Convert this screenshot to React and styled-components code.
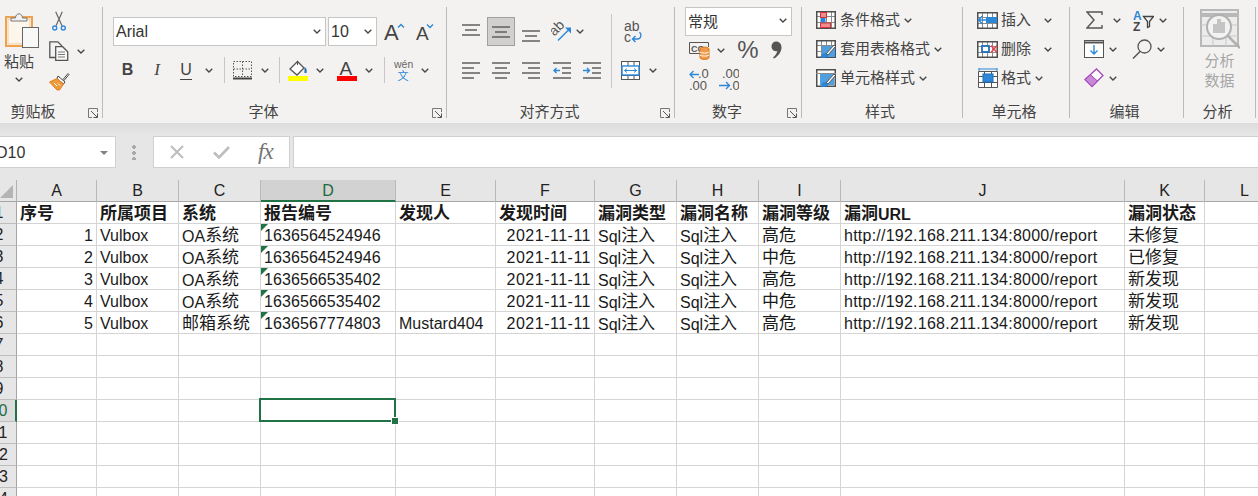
import React from 'react';
import styled, { createGlobalStyle } from 'styled-components';

const CJK = '"Noto Sans CJK SC", "Liberation Sans", sans-serif';
const LAT = '"Liberation Sans", "Noto Sans CJK SC", sans-serif';
const BLUE = '#2b88d8';

const Global = createGlobalStyle`
  html, body { margin: 0; padding: 0; width: 1258px; height: 496px; overflow: hidden; background: #fff; }
  * { box-sizing: border-box; }
`;

const Page = styled.div`
  width: 1258px; height: 496px; overflow: hidden; display: flex; flex-direction: column;
  font-family: ${LAT}; color: #333;
`;

/* ---------- ribbon ---------- */
const Ribbon = styled.div`
  height: 123px; flex: none; display: flex; align-items: flex-start; padding-top: 7px; background: #f3f2f1;
`;
const Group = styled.section`
  width: ${p => p.$w}px; height: 111px; flex: none; display: flex; flex-direction: column;
  border-right: 1px solid #bdbbb9;
`;
const Body = styled.div`
  height: 95px; flex: none; display: flex; flex-direction: ${p => p.$row ? 'row' : 'column'};
  padding-top: ${p => p.$top ?? 0}px; padding-left: ${p => p.$left ?? 0}px; gap: ${p => p.$gap ?? 0}px;
`;
const LabelRow = styled.div`
  height: 18px; display: grid; grid-template-columns: 1fr auto 1fr; align-items: center;
  font: 400 15px/18px ${CJK}; color: #444; padding-right: 4px;
`;
const LabelText = styled.span`grid-column: 2; margin-right: ${p => p.$pull ?? 0}px;`;
const LauncherSlot = styled.span`grid-column: 3; justify-self: end; display: flex; margin-top: 3px;`;
const Row = styled.div`
  display: flex; align-items: center; flex: none; height: ${p => p.$h}px;
  padding-left: ${p => p.$left ?? 0}px; margin-top: ${p => p.$mt ?? 0}px;
`;
const Tool = styled.span`
  display: flex; align-items: center; justify-content: center; flex: none;
  width: ${p => p.$w}px; height: ${p => p.$h ? p.$h + 'px' : 'auto'}; margin-left: ${p => p.$ml ?? 0}px;
  ${p => p.$active ? 'background: #d2d0ce; border: 1px solid #a19f9d;' : ''}
`;
const Divider = styled.span`
  width: 1px; height: 26px; flex: none; background: #c8c6c4; margin-left: ${p => p.$ml}px;
`;
const TallDivider = styled.span`
  width: 1px; height: 74px; flex: none; background: #c8c6c4; margin: 7px 0 0 ${p => p.$ml}px;
`;
const Select = styled.div`
  width: ${p => p.$w}px; height: 29px; flex: none; margin-left: ${p => p.$ml ?? 0}px;
  display: flex; align-items: center; justify-content: space-between;
  background: #fff; border: 1px solid #c8c6c4; padding: 0 4px ${p => p.$cjk ? 2 : 0}px 2px;
  font: 400 ${p => p.$fs ?? 16}px ${p => p.$cjk ? CJK : LAT}; color: #333;
`;
const ToolLabel = styled.span`
  font: 400 15px/20px ${CJK}; color: #444; margin-left: ${p => p.$ml ?? 0}px; white-space: nowrap;
  padding-bottom: 2px;
`;
const PasteCol = styled.div`
  width: 38px; display: flex; flex-direction: column; align-items: center; flex: none;
`;
const PasteIconSlot = styled.span`display: flex; margin: 5px 0 0 6px; height: 36px;`;
const PasteLabel = styled.span`font: 400 15px/20px ${CJK}; color: #444; margin-top: 3px;`;
const PasteChevron = styled.span`display: flex; margin-top: 6px;`;
const SmallCol = styled.div`
  display: flex; flex-direction: column; gap: 10px; margin-left: 11px; padding-top: 4px;
`;
const Column = styled.div`display: flex; flex-direction: column; flex: none; padding-top: ${p => p.$top ?? 0}px;`;
const Percent = styled.span`font: 400 24px/24px ${LAT}; color: #555;`;
const MutedText = styled.div`
  font: 400 15px/20px ${CJK}; color: #a6a6a6; text-align: center; margin-top: 1px;
`;
const AnalysisBody = styled(Body)`align-items: center; padding-left: 0;`;

/* ---------- formula bar ---------- */
const FormulaBar = styled.div`
  height: 57px; flex: none; display: flex; align-items: flex-start; padding-top: 13px;
  background: linear-gradient(#dcdcdc 0, #e6e6e6 11px);
`;
const NameBox = styled.div`
  width: 126px; height: 32px; margin-left: -10px; flex: none; display: flex; align-items: center;
  justify-content: space-between; background: #fff; border: 1px solid #d0d0d0; padding: 1px 7px 0 5px;
  font: 400 16px ${LAT}; color: #333;
`;
const NameArrow = styled.span`
  width: 0; height: 0; border-left: 4px solid transparent; border-right: 4px solid transparent;
  border-top: 4px solid #808080;
`;
const GripDots = styled.span`
  width: 4px; height: 16px; margin: 8px 0 0 16px; flex: none;
  background: radial-gradient(circle 2px, #a8a8a8 98%, transparent) 0 0 / 4px 6px repeat-y;
`;
const FxBox = styled.div`
  width: 137px; height: 32px; margin-left: 17px; flex: none; display: flex; align-items: center;
  background: #fff; border: 1px solid #d0d0d0;
`;
const FxGlyph = styled.span`
  font: italic 400 23px/28px "Liberation Serif", serif; color: #737373; margin-left: 28px; letter-spacing: -1px;
`;
const FormulaInput = styled.div`
  flex: 1; height: 32px; margin-left: 3px; background: #fff; border: 1px solid #d0d0d0; border-right: 0;
`;

/* ---------- sheet ---------- */
const Sheet = styled.div`
  display: grid; margin-left: -18px; width: 1302px; flex: none;
  grid-template-columns: 35px 80px 82px 82px 135px 100px 99px 82px 82px 82px 284px 80px 80px;
  grid-auto-rows: 22px; background: #fff;
`;
const Corner = styled.div`
  background: #e6e6e6; border-right: 1px solid #b1b1b1; border-bottom: 1px solid #a6a6a6;
  display: flex; align-items: flex-end; justify-content: flex-end; padding: 0 3px 3px 0;
`;
const CornerMark = styled.span`
  width: 0; height: 0; border-left: 13px solid transparent; border-bottom: 13px solid #b4b4b4;
`;
const ColHead = styled.div`
  background: ${p => p.$on ? '#d2d2d2' : '#e6e6e6'};
  border-right: 1px solid #b9b9b9;
  border-bottom: ${p => p.$on ? '2px solid #217346' : '1px solid #a6a6a6'};
  display: flex; align-items: center; justify-content: center; padding-top: 1px;
  font: 400 16px/20px ${LAT}; color: ${p => p.$on ? '#1e6b41' : '#222'};
`;
const RowHead = styled.div`
  background: ${p => p.$on ? '#dcdcdc' : '#e6e6e6'};
  border-right: ${p => p.$on ? '2px solid #217346' : '1px solid #a6a6a6'};
  border-bottom: 1px solid #bdbdbd;
  text-align: center; font: 400 16px/21px ${LAT}; color: ${p => p.$on ? '#1e6b41' : '#222'};
`;
const Cell = styled.div`
  position: relative; display: flex; align-items: center; overflow: hidden; white-space: nowrap;
  justify-content: ${p => p.$right ? 'flex-end' : 'flex-start'};
  padding: 1px 3px 0 3px; border-right: 1px solid #d4d4d4; border-bottom: 1px solid #d4d4d4;
  font: ${p => p.$head ? 700 : 400} 16px/21px ${LAT}; color: #1a1a1a;
  letter-spacing: ${p => p.$track ?? 0}px;
  ${p => p.$flag ? `&::before { content: ""; position: absolute; left: 0; top: 0; width: 0; height: 0;
    border-top: 7px solid #217346; border-right: 7px solid transparent; }` : ''}
`;
const SelectedCell = styled(Cell)`
  overflow: visible;
  &::after { content: ""; position: absolute; left: -2px; top: -2px; right: -1px; bottom: -1px;
    border: 2px solid #217346; }
  &::before { content: ""; position: absolute; right: -3px; bottom: -3px; width: 6px; height: 6px; z-index: 1;
    background: #217346; box-shadow: 0 0 0 1px #fff; clip-path: inset(-1px); }
`;
const CellText = styled.span`display: block;`;
const Han = styled.span`
  font-family: ${CJK}; font-size: 17px; line-height: 21px; vertical-align: 1px; letter-spacing: 0;
`;

/* ---------- icons ---------- */
const Svg = ({ w, h, children }) => (
  <svg width={w} height={h} viewBox={`0 0 ${w} ${h}`} fill="none" style={{ display: 'block', flex: 'none' }}>{children}</svg>
);
const Chevron = () => (
  <Svg w={8} h={5}><path d="M.7.7 4 4l3.3-3.3" stroke="#444" strokeWidth="1.3" /></Svg>
);
const Launcher = () => (
  <Svg w={10} h={10}>
    <path d="M9.5 4V.5H.5v9H4" stroke="#777" />
    <path d="M3 3l6 6M9.5 5.5v4h-4" stroke="#555" />
  </Svg>
);
const Paste = () => (
  <Svg w={34} h={36}>
    <rect x="1" y="5" width="26" height="29" fill="#fff" stroke="#eda252" strokeWidth="2" />
    <rect x="3" y="7" width="22" height="25" fill="#fdf6ec" stroke="#f6c994" />
    <path d="M6 9V6h4.500c0-5.500 7-5.500 7 0H22v3z" fill="#f3f2f1" stroke="#777" />
    <rect x="17.500" y="15.500" width="16" height="20" fill="#f8f8f8" stroke="#666" />
  </Svg>
);
const Scissors = () => (
  <Svg w={14} h={20}>
    <path d="M4 14.800 10.300.8M10 14.800 3.700.8" stroke="#666" strokeWidth="1.200" />
    <circle cx="2.700" cy="17" r="2" stroke={BLUE} strokeWidth="1.400" />
    <circle cx="11.300" cy="17" r="2" stroke={BLUE} strokeWidth="1.400" />
  </Svg>
);
const Copy = () => (
  <Svg w={20} h={20}>
    <path d="M6 16.500H.8V.8h8L13 5" stroke="#555" strokeWidth="1.300" />
    <path d="M6.700 5.700h7l5 5v8.700h-12z" fill="#f8f8f8" stroke="#555" strokeWidth="1.300" />
    <path d="M9 11h7M9 13.500h7M9 16h7" stroke="#777" />
  </Svg>
);
const Brush = () => (
  <Svg w={21} h={20}>
    <path d="M14 8.500 19 2.500l1 1-5 6z" stroke="#444" fill="#fff" />
    <path d="M9 5l7 6-1.500 2L8 7.500z" fill="#fff" stroke="#444" />
    <path d="M8 7.500 14.500 13l-4 6H8L.5 11z" fill="#ed9a3c" stroke="#e67e22" />
    <path d="M5 12l3 3M9 12.500l2 2" stroke="#fff" />
  </Svg>
);
const BigA = ({ caret, size, x }) => (
  <Svg w={22} h={24}>
    <text x="0" y="20" fontFamily="Liberation Sans" fontSize={size} fill="#444">A</text>
    {caret === 'up'
      ? <path d={`M${x} 7.500l3-3 3 3`} stroke={BLUE} strokeWidth="1.400" />
      : <path d={`M${x} 4.500l3 3 3-3`} stroke={BLUE} strokeWidth="1.400" />}
  </Svg>
);
const BoldGlyph = styled.span`font: 700 16px/20px ${LAT}; color: #444;`;
const ItalicGlyph = styled.span`font: italic 400 17px/20px "Liberation Serif", serif; color: #444;`;
const UnderGlyph = styled.span`font: 400 16px/18px ${LAT}; color: #444; border-bottom: 1px solid #444;`;
const Borders = () => (
  <Svg w={19} h={19}>
    <path d="M.5 .5h18v15h-18zM9.500 .5v15M.5 8h18" stroke="#555" strokeDasharray="1.500 1.500" />
    <path d="M0 17.500h19" stroke="#444" strokeWidth="2" />
  </Svg>
);
const FillColor = () => (
  <Svg w={21} h={21}>
    <path d="M9.500 1.500 2 9l7 6 7-7z" stroke="#555" strokeWidth="1.300" fill="#fff" />
    <path d="M9.500 1.500V5" stroke="#555" />
    <path d="M16.500 7c2 1 2.500 3 2 6h-2z" fill="#1f6fb8" />
    <rect x="0" y="16" width="20" height="5" fill="#ffff00" />
  </Svg>
);
const FontColor = () => (
  <Svg w={20} h={21}>
    <text x="2.500" y="14.500" fontFamily="Liberation Sans" fontSize="19" fill="#444">A</text>
    <rect x="0" y="16" width="20" height="5" fill="#ff0000" />
  </Svg>
);
const Phonetic = () => (
  <Svg w={19} h={22}>
    <text x="0" y="9" fontFamily="Liberation Sans" fontSize="10.500" fill="#666">wén</text>
    <text x="3.500" y="21" fontFamily="Noto Sans CJK SC" fontSize="11" fill={BLUE}>文</text>
  </Svg>
);
const Lines = ({ rows, w = 18, h = 24 }) => (
  <Svg w={w} h={h}>
    {rows.map(([a, b, y]) => <path key={y} d={`M${a} ${y}H${b}`} stroke="#5f5f5f" strokeWidth="1.500" />)}
  </Svg>
);
const Orientation = () => (
  <Svg w={21} h={21}>
    <text x="0" y="12" transform="rotate(-45 6 10)" fontFamily="Liberation Sans" fontSize="14" fill="#555">ab</text>
    <path d="M7 19.500 18 8.500" stroke={BLUE} strokeWidth="1.500" />
    <path d="M14 6.500h6v6z" fill={BLUE} />
  </Svg>
);
const Wrap = () => (
  <Svg w={19} h={22}>
    <text x="0" y="10" fontFamily="Liberation Sans" fontSize="14" fill="#555">ab</text>
    <text x="0" y="20.500" fontFamily="Liberation Sans" fontSize="14" fill="#555">c</text>
    <path d="M15.500 11c3 3 1 7-2 7H8.500m3-3-3 3 3 3" stroke={BLUE} strokeWidth="1.400" />
  </Svg>
);
const Merge = () => (
  <Svg w={19} h={19}>
    <rect x=".5" y=".5" width="18" height="18" stroke="#555" fill="#fff" />
    <path d="M0 5.500h19M0 14.500h19M7 .5v5M13 .5v5M7 14.500v4M13 14.500v4" stroke="#555" />
    <rect x="1" y="5" width="17" height="9" fill="#fff" stroke={BLUE} strokeWidth="1.400" />
    <path d="M3.500 9.500h12M6 7.500l-2.500 2L6 11.500M13 7.500l2.500 2-2.500 2" stroke={BLUE} />
  </Svg>
);
const Accounting = () => (
  <Svg w={21} h={19}>
    <path d="M12 12.500H.5v-11h19V6" stroke="#555" />
    <text x="2" y="10.500" fontFamily="Liberation Sans" fontSize="9" fontWeight="700" fill="#555">CC</text>
    <path d="M11 8c0-2.500 9-2.500 9 0v8.500c0 2.500-9 2.500-9 0z" fill="#f2994a" stroke="#d9730d" />
    <path d="M11 11c1.500 1.500 7.500 1.500 9 0M11 14c1.500 1.500 7.500 1.500 9 0" stroke="#fff" />
  </Svg>
);
const Comma = () => (
  <Svg w={11} h={18}>
    <path d="M5 .5c3.500 0 5.500 2.500 5.500 6C10.500 11 7 15.500 3 17.500l-1-1c2.500-2 4-4.500 4.300-6.500C3 11 .5 8.500.5 5.500.5 2.500 2.500.5 5 .5z" fill="#555" />
  </Svg>
);
const DecInc = () => (
  <Svg w={20} h={24}>
    <text x="9" y="10" fontFamily="Liberation Sans" fontSize="13" fill="#555">.0</text>
    <text x="0" y="21.500" fontFamily="Liberation Sans" fontSize="13" fill="#555">.00</text>
    <path d="M10 6.500H1M4.500 3 1 6.500 4.500 10" stroke={BLUE} strokeWidth="1.300" />
  </Svg>
);
const DecDec = () => (
  <Svg w={20} h={24}>
    <text x="3" y="10" fontFamily="Liberation Sans" fontSize="13" fill="#555">.00</text>
    <text x="10" y="21.500" fontFamily="Liberation Sans" fontSize="13" fill="#555">.0</text>
    <path d="M0 17.500h10M7 14l3.500 3.500L7 21" stroke={BLUE} strokeWidth="1.300" />
  </Svg>
);
const Grid = ({ children, w = 20, h = 18 }) => (
  <Svg w={w} h={h}>
    <rect x=".5" y=".5" width={w - 1} height={h - 1} fill="#fff" />
    {[5, 10, 15].map(x => <path key={x} d={`M${x}.5 0v${h}`} stroke="#8a8a8a" />)}
    {[5, 11].map(y => <path key={y} d={`M0 ${y}.5h${w}`} stroke="#8a8a8a" />)}
    <rect x=".75" y=".75" width={w - 1.5} height={h - 1.5} stroke="#4f4f4f" strokeWidth="1.500" />
    {children}
  </Svg>
);
const MiniBrush = () => (
  <g>
    <path d="M10 14 18 5l1.500 1.500L12 15z" fill="#fff" stroke="#555" />
    <path d="M5 18c1-4 3-5 5-4l2 1.500c-1 2-3 3-7 2.500z" fill={BLUE} stroke="#1f6fb8" strokeWidth=".5" />
  </g>
);
const CondFormat = () => (
  <Grid>
    <rect x="4.500" y="1.500" width="6" height="5" fill="#f28b8b" stroke="#d13438" />
    <rect x="4.500" y="7" width="5" height="5" fill={BLUE} />
    <rect x="4.500" y="12" width="10" height="4.500" fill="#f28b8b" stroke="#d13438" />
  </Grid>
);
const TableFormat = () => (
  <Grid>
    <path d="M6 6h13v11H6z" fill="#4d9fe0" />
    <MiniBrush />
  </Grid>
);
const CellStyle = () => (
  <Svg w={20} h={18}>
    <rect x=".75" y=".75" width="18.500" height="16.500" stroke="#4f4f4f" strokeWidth="1.500" fill="#fff" />
    <path d="M0 4.500h20" stroke="#8a8a8a" />
    <rect x="4" y="5" width="14" height="11" fill="#4d9fe0" />
    <MiniBrush />
  </Svg>
);
const InsertCells = () => (
  <Grid w={21} h={17}>
    <rect x="9" y="5" width="11" height="6" fill={BLUE} />
    <path d="M12 8H2M5.500 4 1.500 8l4 4" stroke={BLUE} strokeWidth="1.500" />
  </Grid>
);
const DeleteCells = () => (
  <Grid w={21} h={17}>
    <rect x="5" y="5" width="7" height="6" fill="#fff" stroke="#1f6fb8" strokeWidth="1.800" />
    <path d="M14 4.500l6 7M20 4.500l-6 7" stroke="#e8484d" strokeWidth="1.600" />
  </Grid>
);
const FormatCells = () => (
  <Svg w={20} h={20}>
    <path d="M.5 3.500h19v16H.5zM.5 14.500h19M6.500 3.500v16M13.500 3.500v16M.5 8.500h19" stroke="#555" fill="#fff" />
    <path d="M1 1h18M1 0v3M19 0v3" stroke={BLUE} />
    <rect x="5" y="6" width="10" height="8" fill={BLUE} stroke="#1f6fb8" />
  </Svg>
);
const Sigma = () => (
  <Svg w={17} h={18}>
    <path d="M16 4V1H1l7 8-7 8h15v-3" stroke="#555" strokeWidth="1.400" />
  </Svg>
);
const SortFilter = () => (
  <Svg w={21} h={21}>
    <text x="0" y="9.500" fontFamily="Liberation Sans" fontSize="12" fontWeight="700" fill={BLUE}>A</text>
    <text x="0" y="21" fontFamily="Liberation Sans" fontSize="12" fontWeight="700" fill="#444">Z</text>
    <path d="M10.500 6.500h10l-4 5v5l-2 1v-6z" stroke="#444" strokeWidth="1.300" />
  </Svg>
);
const FillDown = () => (
  <Svg w={20} h={18}>
    <rect x=".5" y=".5" width="19" height="17" stroke="#555" fill="#fff" />
    <path d="M0 2.500h20" stroke="#555" strokeWidth="2" />
    <path d="M10 5v9M6.500 10.500 10 14l3.500-3.500" stroke={BLUE} strokeWidth="1.400" />
  </Svg>
);
const Find = () => (
  <Svg w={20} h={20}>
    <circle cx="12.500" cy="7.500" r="6.500" stroke="#555" strokeWidth="1.300" />
    <path d="M8 12.500 1 19.500" stroke="#555" strokeWidth="1.500" />
  </Svg>
);
const Eraser = () => (
  <Svg w={20} h={20}>
    <path d="M12.500 1 19 7.500 8 18.500 1 11.500z" fill="#fff" stroke="#a347ba" strokeWidth="1.300" />
    <path d="M6.500 6.800 13.500 13 8 18.500 1 11.500z" fill="#c789d6" stroke="#a347ba" />
  </Svg>
);
const Analyze = () => (
  <Svg w={40} h={40}>
    <rect x="1" y="1" width="37" height="36" fill="#ececec" stroke="#b8b8b8" strokeWidth="2" />
    <path d="M1 6h38" stroke="#b8b8b8" strokeWidth="4" />
    <path d="M1 16h37M1 27h37M13 6v31M26 6v31" stroke="#c8c8c8" />
    <circle cx="19" cy="18" r="12" fill="#f3f2f1" stroke="#b0b0b0" strokeWidth="2" />
    <path d="M13 15h4v9h-4zM17 10h4v14h-4zM21 13h4v11h-4z" fill="#c4c4c4" />
    <path d="M28 27l12 12" stroke="#b0b0b0" strokeWidth="2.500" />
  </Svg>
);
const Cross = () => (
  <Svg w={14} h={14}><path d="M1 1l12 12M13 1 1 13" stroke="#bdbdbd" strokeWidth="2" /></Svg>
);
const Check = () => (
  <Svg w={17} h={13}><path d="M1 6.500l5 5L16 1" stroke="#bdbdbd" strokeWidth="2.600" /></Svg>
);

/* ---------- data ---------- */
const COLS = ['A','B','C','D','E','F','G','H','I','J','K','L'];
const HEAD = ['序号','所属项目','系统','报告编号','发现人','发现时间','漏洞类型','漏洞名称','漏洞等级','漏洞URL','漏洞状态',''];
const URL = 'http://192.168.211.134:8000/report';
const DATA = [
  ['1','Vulbox','OA系统','1636564524946','','2021-11-11','Sql注入','Sql注入','高危',URL,'未修复',''],
  ['2','Vulbox','OA系统','1636564524946','','2021-11-11','Sql注入','Sql注入','中危',URL,'已修复',''],
  ['3','Vulbox','OA系统','1636566535402','','2021-11-11','Sql注入','Sql注入','高危',URL,'新发现',''],
  ['4','Vulbox','OA系统','1636566535402','','2021-11-11','Sql注入','Sql注入','中危',URL,'新发现',''],
  ['5','Vulbox','邮箱系统','1636567774803','Mustard404','2021-11-11','Sql注入','Sql注入','高危',URL,'新发现',''],
];
const BLANK = COLS.map(() => '');
const ROWS = [HEAD, ...DATA, ...Array.from({ length: 8 }, () => BLANK)];
const TRACK = { 3: 0.08, 5: 0.5, 9: 0.24 };

const Text = ({ value }) => (
  <CellText>
    {value.split(/([\u4e00-\u9fff]+)/).map((part, i) =>
      /[\u4e00-\u9fff]/.test(part) ? <Han key={i}>{part}</Han> : part
    )}
  </CellText>
);

const GroupLabel = ({ text, launcher, pull }) => (
  <LabelRow>
    <LabelText $pull={pull}>{text}</LabelText>
    {launcher && <LauncherSlot><Launcher /></LauncherSlot>}
  </LabelRow>
);

export default function App() {
  return (
    <Page>
      <Global />
      <Ribbon>
        <Group $w={103}>
          <Body $row>
            <PasteCol>
              <PasteIconSlot><Paste /></PasteIconSlot>
              <PasteLabel>粘贴</PasteLabel>
              <PasteChevron><Chevron /></PasteChevron>
            </PasteCol>
            <SmallCol>
              <Row $h={20}><Tool $w={14} $ml={3}><Scissors /></Tool></Row>
              <Row $h={20}><Copy /><Tool $w={8} $ml={8}><Chevron /></Tool></Row>
              <Row $h={20}><Brush /></Row>
            </SmallCol>
          </Body>
          <GroupLabel text="剪贴板" launcher pull={32} />
        </Group>

        <Group $w={344}>
          <Body $top={10} $left={10}>
            <Row $h={29}>
              <Select $w={213}>Arial<Chevron /></Select>
              <Select $w={49} $ml={2}>10<Chevron /></Select>
              <Tool $w={22} $ml={7}><BigA caret="up" size={22} x={14} /></Tool>
              <Tool $w={22} $ml={10}><BigA caret="down" size={19} x={11} /></Tool>
            </Row>
            <Row $h={24} $mt={12}>
              <Tool $w={29}><BoldGlyph>B</BoldGlyph></Tool>
              <Tool $w={30}><ItalicGlyph>I</ItalicGlyph></Tool>
              <Tool $w={28}><UnderGlyph>U</UnderGlyph></Tool>
              <Tool $w={8} $ml={5}><Chevron /></Tool>
              <Divider $ml={11} />
              <Tool $w={19} $ml={8}><Borders /></Tool>
              <Tool $w={8} $ml={9}><Chevron /></Tool>
              <Divider $ml={10} />
              <Tool $w={21} $ml={8}><FillColor /></Tool>
              <Tool $w={8} $ml={7}><Chevron /></Tool>
              <Tool $w={20} $ml={13}><FontColor /></Tool>
              <Tool $w={8} $ml={8}><Chevron /></Tool>
              <Divider $ml={11} />
              <Tool $w={19} $ml={9}><Phonetic /></Tool>
              <Tool $w={8} $ml={8}><Chevron /></Tool>
            </Row>
          </Body>
          <GroupLabel text="字体" launcher pull={18} />
        </Group>

        <Group $w={228}>
          <Body $row $left={15}>
            <Column $top={10}>
              <Row $h={29}>
                <Tool $w={18}><Lines rows={[[0,18,7],[3,15,12],[0,18,17]]} h={28} /></Tool>
                <Tool $w={28} $h={29} $ml={7} $active><Lines rows={[[0,18,8],[3,15,13],[0,18,18]]} h={26} /></Tool>
                <Tool $w={18} $ml={7}><Lines rows={[[0,18,13],[3,15,18],[0,18,23]]} h={28} /></Tool>
                <Tool $w={21} $ml={11}><Orientation /></Tool>
                <Tool $w={8} $ml={4}><Chevron /></Tool>
              </Row>
              <Row $h={24} $mt={12}>
                <Tool $w={18}><Lines rows={[[0,18,5],[0,12,10],[0,18,15],[0,12,20]]} /></Tool>
                <Tool $w={18} $ml={12}><Lines rows={[[0,18,5],[3,15,10],[0,18,15],[3,15,20]]} /></Tool>
                <Tool $w={18} $ml={12}><Lines rows={[[0,18,5],[6,18,10],[0,18,15],[6,18,20]]} /></Tool>
                <Tool $w={18} $ml={13}>
                  <Svg w={18} h={24}>
                    <path d="M0 5h18M9 10h9M9 15h9M0 20h18" stroke="#5f5f5f" strokeWidth="1.500" />
                    <path d="M7 12.500H1M3.500 10 1 12.500 3.500 15" stroke={BLUE} strokeWidth="1.400" />
                  </Svg>
                </Tool>
                <Tool $w={18} $ml={12}>
                  <Svg w={18} h={24}>
                    <path d="M0 5h18M9 10h9M9 15h9M0 20h18" stroke="#5f5f5f" strokeWidth="1.500" />
                    <path d="M0 12.500h6.500M4 10l2.500 2.500L4 15" stroke={BLUE} strokeWidth="1.400" />
                  </Svg>
                </Tool>
              </Row>
            </Column>
            <TallDivider $ml={10} />
            <Column $top={14}>
              <Row $h={22} $left={12}><Wrap /></Row>
              <Row $h={20} $mt={17} $left={9}>
                <Merge />
                <Tool $w={8} $ml={9}><Chevron /></Tool>
              </Row>
            </Column>
          </Body>
          <GroupLabel text="对齐方式" launcher pull={18} />
        </Group>

        <Group $w={127}>
          <Body $left={10}>
            <Select $w={107} $cjk $fs={15}>常规<Chevron /></Select>
            <Row $h={24} $mt={2}>
              <Tool $w={21} $ml={4}><Accounting /></Tool>
              <Tool $w={8} $ml={7}><Chevron /></Tool>
              <Tool $w={22} $ml={12}><Percent>%</Percent></Tool>
              <Tool $w={11} $ml={12}><Comma /></Tool>
            </Row>
            <Row $h={24} $mt={6}>
              <Tool $w={20} $ml={4}><DecInc /></Tool>
              <Tool $w={20} $ml={10}><DecDec /></Tool>
            </Row>
          </Body>
          <GroupLabel text="数字" launcher pull={18} />
        </Group>

        <Group $w={161}>
          <Body $left={14} $gap={3}>
            <Row $h={26}><CondFormat /><ToolLabel $ml={4}>条件格式</ToolLabel><Tool $w={8} $ml={4}><Chevron /></Tool></Row>
            <Row $h={26}><TableFormat /><ToolLabel $ml={4}>套用表格格式</ToolLabel><Tool $w={8} $ml={4}><Chevron /></Tool></Row>
            <Row $h={26}><CellStyle /><ToolLabel $ml={4}>单元格样式</ToolLabel><Tool $w={8} $ml={4}><Chevron /></Tool></Row>
          </Body>
          <GroupLabel text="样式" />
        </Group>

        <Group $w={107}>
          <Body $left={14} $gap={3}>
            <Row $h={26}><InsertCells /><ToolLabel $ml={3}>插入</ToolLabel><Tool $w={8} $ml={13}><Chevron /></Tool></Row>
            <Row $h={26}><DeleteCells /><ToolLabel $ml={3}>删除</ToolLabel><Tool $w={8} $ml={13}><Chevron /></Tool></Row>
            <Row $h={26}><Tool $w={21}><FormatCells /></Tool><ToolLabel $ml={3}>格式</ToolLabel><Tool $w={8} $ml={4}><Chevron /></Tool></Row>
          </Body>
          <GroupLabel text="单元格" />
        </Group>

        <Group $w={114}>
          <Body $left={14} $gap={3}>
            <Row $h={26}>
              <Tool $w={17} $ml={2}><Sigma /></Tool>
              <Tool $w={8} $ml={10}><Chevron /></Tool>
              <Tool $w={21} $ml={12}><SortFilter /></Tool>
              <Tool $w={8} $ml={5}><Chevron /></Tool>
            </Row>
            <Row $h={26}>
              <Tool $w={20}><FillDown /></Tool>
              <Tool $w={8} $ml={5}><Chevron /></Tool>
              <Tool $w={20} $ml={15}><Find /></Tool>
              <Tool $w={8} $ml={5}><Chevron /></Tool>
            </Row>
            <Row $h={26}>
              <Tool $w={20}><Eraser /></Tool>
              <Tool $w={8} $ml={5}><Chevron /></Tool>
            </Row>
          </Body>
          <GroupLabel text="编辑" />
        </Group>

        <Group $w={72}>
          <AnalysisBody $top={2}>
            <Analyze />
            <MutedText>分析<br />数据</MutedText>
          </AnalysisBody>
          <GroupLabel text="分析" />
        </Group>
      </Ribbon>

      <FormulaBar>
        <NameBox>D10<NameArrow /></NameBox>
        <GripDots />
        <FxBox>
          <Tool $w={14} $ml={16}><Cross /></Tool>
          <Tool $w={17} $ml={29}><Check /></Tool>
          <FxGlyph>fx</FxGlyph>
        </FxBox>
        <FormulaInput />
      </FormulaBar>

      <Sheet>
        <Corner><CornerMark /></Corner>
        {COLS.map(c => <ColHead key={c} $on={c === 'D'}>{c}</ColHead>)}
        {ROWS.map((row, r) => (
          <React.Fragment key={r}>
            <RowHead $on={r === 9}>{r + 1}</RowHead>
            {row.map((v, c) => {
              if (r === 9 && c === 3) return <SelectedCell key={c} />;
              return (
                <Cell
                  key={c}
                  $head={r === 0}
                  $right={r > 0 && (c === 0 || c === 5) && v !== ''}
                  $flag={c === 3 && r >= 1 && r <= 5}
                  $track={r > 0 ? TRACK[c] : 0}
                >
                  <Text value={v} />
                </Cell>
              );
            })}
          </React.Fragment>
        ))}
      </Sheet>
    </Page>
  );
}
